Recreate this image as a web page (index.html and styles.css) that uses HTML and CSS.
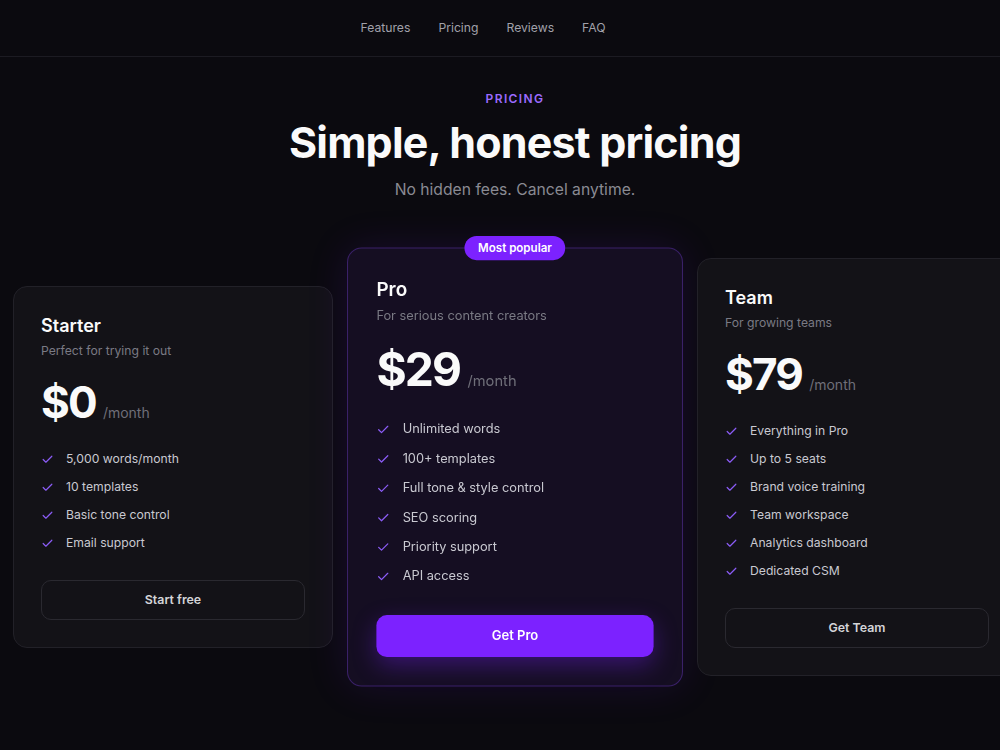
FILE: index.html
```html
<!DOCTYPE html>
<html lang="en">
<head>
    <meta charset="UTF-8">
    <meta name="viewport" content="width=device-width, initial-scale=1.0">
    <title>Pricing</title>
    <link rel="stylesheet" href="styles.css">
</head>
<body>

    <header class="topbar">
        <nav class="nav-links">
            <a href="#features">Features</a>
            <a href="#pricing">Pricing</a>
            <a href="#reviews">Reviews</a>
            <a href="#faq">FAQ</a>
        </nav>
    </header>

    <main class="pricing" id="pricing">
        <p class="eyebrow">PRICING</p>
        <h1>Simple, honest pricing</h1>
        <p class="lead">No hidden fees. Cancel anytime.</p>

        <div class="plans">
            <div class="plan">
                <h2>Starter</h2>
                <p class="plan-desc">Perfect for trying it out</p>
                <div class="price"><span class="amount">$0</span><span class="period">/month</span></div>
                <ul class="features">
                    <li>5,000 words/month</li>
                    <li>10 templates</li>
                    <li>Basic tone control</li>
                    <li>Email support</li>
                </ul>
                <a href="#" class="button">Start free</a>
            </div>

            <div class="plan plan-featured">
                <span class="badge">Most popular</span>
                <h2>Pro</h2>
                <p class="plan-desc">For serious content creators</p>
                <div class="price"><span class="amount">$29</span><span class="period">/month</span></div>
                <ul class="features">
                    <li>Unlimited words</li>
                    <li>100+ templates</li>
                    <li>Full tone &amp; style control</li>
                    <li>SEO scoring</li>
                    <li>Priority support</li>
                    <li>API access</li>
                </ul>
                <a href="#" class="button button-primary">Get Pro</a>
            </div>

            <div class="plan">
                <h2>Team</h2>
                <p class="plan-desc">For growing teams</p>
                <div class="price"><span class="amount">$79</span><span class="period">/month</span></div>
                <ul class="features">
                    <li>Everything in Pro</li>
                    <li>Up to 5 seats</li>
                    <li>Brand voice training</li>
                    <li>Team workspace</li>
                    <li>Analytics dashboard</li>
                    <li>Dedicated CSM</li>
                </ul>
                <a href="#" class="button">Get Team</a>
            </div>
        </div>
    </main>

</body>
</html>
```

FILE: styles.css
```css
body {
    font-family: 'Inter', 'Roboto', sans-serif;
    margin: 0;
    padding: 0;
    background-color: #0b0a0f;
    color: #fafafa;
    overflow-x: hidden;
}

.topbar {
    height: 56px;
    border-bottom: 1px solid #1c1b22;
}

.nav-links {
    display: flex;
    justify-content: center;
    align-items: center;
    gap: 28px;
    height: 100%;
    padding-right: 34px;
}

.nav-links a {
    color: #a1a1aa;
    text-decoration: none;
    font-size: 12.2px;
    line-height: 54px;
}

.pricing {
    min-width: 1030px;
    box-sizing: border-box;
    padding: 34px 13px 80px;
    text-align: center;
}

.eyebrow {
    margin: 0;
    font-size: 12px;
    line-height: 16px;
    font-weight: 600;
    letter-spacing: 1.4px;
    color: #9b6bff;
}

.pricing h1 {
    margin: 11px 0 0;
    font-size: 43px;
    line-height: 48px;
    font-weight: 700;
    letter-spacing: -0.8px;
}

.lead {
    margin: 12px 0 0;
    font-size: 15.7px;
    line-height: 24px;
    color: #8a8a93;
}

.plans {
    display: grid;
    grid-template-columns: repeat(3, 320px);
    gap: 22px;
    align-items: center;
    margin-top: 56px;
    text-align: left;
}

.plan {
    position: relative;
    padding: 27px;
    background-color: #131217;
    border: 1px solid #222128;
    border-radius: 14px;
}

.plan h2 {
    margin: 0;
    font-size: 18px;
    line-height: 24px;
    font-weight: 600;
}

.plan-desc {
    margin: 3px 0 0;
    font-size: 12.2px;
    line-height: 20px;
    color: #7a7a84;
}

.price {
    display: flex;
    align-items: baseline;
    margin-top: 19px;
}

.amount {
    font-size: 44px;
    line-height: 44px;
    font-weight: 700;
    letter-spacing: -1.8px;
}

.period {
    margin-left: 7px;
    font-size: 14px;
    color: #6f6f79;
}

.features {
    list-style: none;
    margin: 25px 0 0;
    padding: 0;
    display: flex;
    flex-direction: column;
    gap: 8px;
}

.features li {
    display: flex;
    align-items: center;
    gap: 12px;
    font-size: 12.2px;
    line-height: 20px;
    color: #c9c9d1;
}

/* purple tick in front of each feature */
.features li::before {
    content: "";
    width: 13px;
    height: 13px;
    flex-shrink: 0;
    background: url("data:image/svg+xml,%3Csvg xmlns='http://www.w3.org/2000/svg' viewBox='0 0 24 24' fill='none' stroke='%238b5cf6' stroke-width='2.2' stroke-linecap='round' stroke-linejoin='round'%3E%3Cpolyline points='20 6 9 17 4 12'/%3E%3C/svg%3E") no-repeat center / contain;
}

.button {
    display: block;
    margin-top: 27px;
    height: 40px;
    line-height: 38px;
    box-sizing: border-box;
    border: 1px solid #2a2930;
    border-radius: 10px;
    text-align: center;
    text-decoration: none;
    font-size: 12.4px;
    font-weight: 600;
    color: #d4d4d8;
}

.plan-featured {
    background-color: #150e22;
    border-color: #3a2168;
    transform: scale(1.05);
    box-shadow: 0 0 40px rgba(124, 34, 255, 0.12);
}

.badge {
    position: absolute;
    top: -12px;
    left: 50%;
    transform: translateX(-50%);
    height: 23px;
    line-height: 23px;
    padding: 0 13px;
    border-radius: 12px;
    background-color: #7c22ff;
    color: white;
    font-size: 11px;
    font-weight: 600;
    white-space: nowrap;
}

.button-primary {
    border: none;
    line-height: 40px;
    background-color: #7c22ff;
    color: white;
    box-shadow: 0 8px 22px rgba(124, 34, 255, 0.35);
}
```
